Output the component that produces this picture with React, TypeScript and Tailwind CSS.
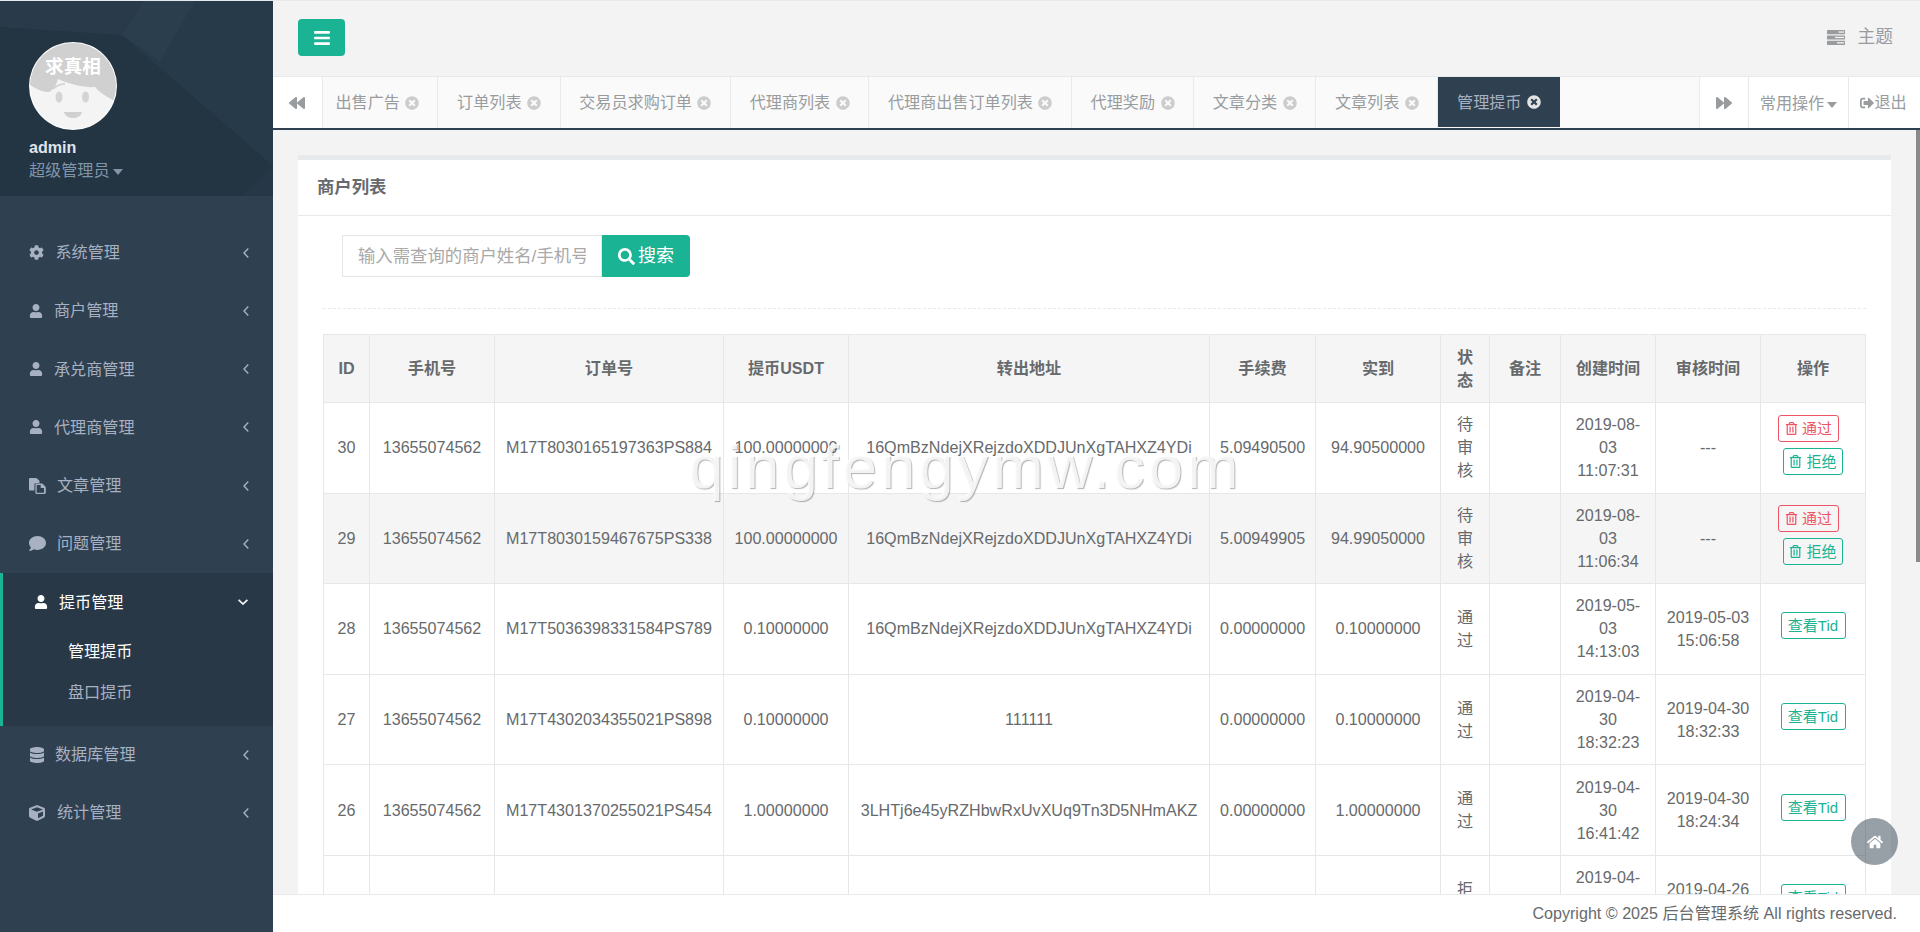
import React from "react";
import {
  FaCog, FaUser, FaComment, FaDatabase, FaCube, FaBars, FaBackward, FaForward,
  FaTimesCircle, FaSearch, FaSignOutAlt, FaRegTrashAlt, FaHome,
} from "react-icons/fa";

const CopyIcon = () => (
  <svg width="17" height="16" viewBox="0 0 17 16" fill="currentColor">
    <path d="M0 1.2C0 .5.5 0 1.2 0h5.6c.5 0 1 .2 1.3.5l2 2c.3.3.4.6.4.9V5H7.5C6.1 5 5.4 5.9 5.4 7v5.6H1.200C.5 12.6 0 12.100 0 11.400z" />
    <path fillRule="evenodd" d="M7.500 5.600h5.300c.4 0 .8.200 1.100.5l2.400 2.400c.3.300.5.700.5 1.100v5.200c0 .6-.5 1.100-1.100 1.100H7.500c-.6 0-1.100-.5-1.100-1.100V6.700c0-.6.5-1.100 1.100-1.100zm.2 1.300v7.800h7.300V10h-3.300V6.900z" />
  </svg>
);

const TasksIcon = () => (
  <svg width="18" height="15" viewBox="0 0 18 15">
    <rect x="0" y="0" width="18" height="4.200" rx=".6" fill="#999c9e" />
    <rect x="0" y="5.400" width="18" height="4.200" rx=".6" fill="#999c9e" />
    <rect x="0" y="10.800" width="18" height="4.200" rx=".6" fill="#999c9e" />
    <rect x="11.500" y="1.400" width="5.500" height="1.300" fill="#f3f3f4" />
    <rect x="8" y="6.800" width="9" height="1.300" fill="#f3f3f4" />
    <rect x="10" y="12.200" width="7" height="1.300" fill="#f3f3f4" />
  </svg>
);

const ChevronLeft = () => (
  <svg width="6" height="10" viewBox="0 0 6 10" fill="none" stroke="currentColor" strokeWidth="1.400" className="shrink-0">
    <polyline points="5.300,.6 1,5 5.300,9.400" />
  </svg>
);

const ChevronDown = () => (
  <svg width="10" height="6" viewBox="0 0 10 6" fill="none" stroke="currentColor" strokeWidth="1.600" className="shrink-0">
    <polyline points=".6,.8 5,5 9.400,.8" />
  </svg>
);

const Avatar = () => (
  <svg width="88" height="88" viewBox="0 0 88 88" className="block">
    <defs>
      <clipPath id="av">
        <circle cx="44" cy="44" r="43" />
      </clipPath>
    </defs>
    <circle cx="44" cy="44" r="44" fill="#ffffff" />
    <g clipPath="url(#av)">
      <rect width="88" height="88" fill="#f4f4f4" />
      <path d="M0 0H88V60C80 56 72 52 66 45C56 46 40 42 29 37C27 44 24 48 20 50C13 50 7 47 0 42Z" fill="#d0d0d0" />
      <path d="M24 47C27 44 31 42 36 42" stroke="#d0d0d0" strokeWidth="1.600" fill="none" />
      <ellipse cx="30" cy="55" rx="3.500" ry="5.500" fill="#d4d4d4" />
      <ellipse cx="56.500" cy="55" rx="3.500" ry="5.500" fill="#d4d4d4" />
      <path d="M35 70H53C52 74 48 76 44 76C40 76 36 74 35 70Z" fill="#d0d0d0" />
      <text x="44" y="30.500" textAnchor="middle" fontSize="18.600" fontWeight="700" fill="#ffffff" fontFamily="'Noto Sans CJK SC', sans-serif">
        求真相
      </text>
    </g>
  </svg>
);

const Nav = ({ icon, label, w }: { icon: React.ReactNode; label: string; w: string }) => (
  <div className="flex h-[58.25px] items-center pl-[29px] pr-[24px] text-[#a7b1c2]">
    <span className={`flex shrink-0 items-center ${w}`}>{icon}</span>
    <span className="flex-1">{label}</span>
    <ChevronLeft />
  </div>
);

const tabs = [
  { t: "出售广告", cls: "pl-[13px] pr-[18px]" },
  { t: "订单列表", cls: "px-[18.6px]" },
  { t: "交易员求购订单", cls: "px-[18.6px]" },
  { t: "代理商列表", cls: "px-[18.6px]" },
  { t: "代理商出售订单列表", cls: "px-[18.6px]" },
  { t: "代理奖励", cls: "px-[18.6px]" },
  { t: "文章分类", cls: "px-[18.6px]" },
  { t: "文章列表", cls: "px-[18.6px]" },
];

const widths = [46, 125, 229, 125, 361, 106, 125, 49, 71, 95, 105, 105];
const heads = ["ID", "手机号", "订单号", "提币USDT", "转出地址", "手续费", "实到", "状态", "备注", "创建时间", "审核时间", "操作"];
const addr = "16QmBzNdejXRejzdoXDDJUnXgTAHXZ4YDi";

type Row = { c: string[]; created: string; audit: string; pending: boolean };
const rows: Row[] = [
  { c: ["30", "13655074562", "M17T8030165197363PS884", "100.00000000", addr, "5.09490500", "94.90500000", "待审核", ""], created: "2019-08-03 11:07:31", audit: "---", pending: true },
  { c: ["29", "13655074562", "M17T8030159467675PS338", "100.00000000", addr, "5.00949905", "94.99050000", "待审核", ""], created: "2019-08-03 11:06:34", audit: "---", pending: true },
  { c: ["28", "13655074562", "M17T5036398331584PS789", "0.10000000", addr, "0.00000000", "0.10000000", "通过", ""], created: "2019-05-03 14:13:03", audit: "2019-05-03 15:06:58", pending: false },
  { c: ["27", "13655074562", "M17T4302034355021PS898", "0.10000000", "111111", "0.00000000", "0.10000000", "通过", ""], created: "2019-04-30 18:32:23", audit: "2019-04-30 18:32:33", pending: false },
  { c: ["26", "13655074562", "M17T4301370255021PS454", "1.00000000", "3LHTj6e45yRZHbwRxUvXUq9Tn3D5NHmAKZ", "0.00000000", "1.00000000", "通过", ""], created: "2019-04-30 16:41:42", audit: "2019-04-30 18:24:34", pending: false },
  { c: ["25", "13655074562", "M17T4268170255021PS120", "1.00000000", addr, "0.00000000", "1.00000000", "拒绝", ""], created: "2019-04-26 10:12:08", audit: "2019-04-26 10:20:16", pending: false },
];

const Td = ({ children }: { children?: React.ReactNode }) => (
  <td className="border border-[#e7e7e7] px-[10px] py-[10px] text-center align-middle">{children}</td>
);

export default function App() {
  return (
    <div className="relative flex h-screen w-full flex-col overflow-hidden bg-[#f3f3f4] font-['Liberation_Sans','Noto_Sans_CJK_SC',sans-serif] text-[16.12px] leading-[23px] text-[#676a6c]">
      <div className="h-px shrink-0 bg-[#e7eaec]" />
      <div className="flex min-h-0 flex-1">
        {/* sidebar */}
        <aside className="flex w-[273px] shrink-0 flex-col bg-[#2f4050]">
          <div className="relative h-[195px] shrink-0 overflow-hidden bg-[#233443] pl-[29px] pt-[41px]">
            <svg className="absolute inset-0" width="273" height="195" viewBox="0 0 273 195">
              <polygon points="0,0 143,0 122,34 0,26" fill="#293b4b" />
              <polygon points="143,0 273,0 273,165 122,34" fill="#273a4a" />
              <polygon points="143,0 195,0 160,60 122,34" fill="#2a3e4e" />
              <polygon points="243,195 273,195 273,165" fill="#263747" />
            </svg>
            <div className="relative">
              <Avatar />
              <div className="mt-[6px] font-bold text-[#dfe4ed]">admin</div>
              <div className="flex items-center text-[#8095a8]">
                超级管理员
                <span className="ml-[3px] mt-[2px] h-0 w-0 border-x-[5.500px] border-t-[6px] border-x-transparent border-t-[#8095a8]" />
              </div>
            </div>
          </div>
          <nav className="pt-[27.500px]">
            <Nav icon={<FaCog size={15} />} label="系统管理" w="w-[26.500px]" />
            <Nav icon={<FaUser size={14} />} label="商户管理" w="w-[25px]" />
            <Nav icon={<FaUser size={14} />} label="承兑商管理" w="w-[25px]" />
            <Nav icon={<FaUser size={14} />} label="代理商管理" w="w-[25px]" />
            <Nav icon={<CopyIcon />} label="文章管理" w="w-[28px]" />
            <Nav icon={<FaComment size={17} />} label="问题管理" w="w-[28px]" />
            <div className="h-[152.500px] border-l-[3px] border-[#1ab394] bg-[#293846]">
              <div className="flex h-[58px] items-center pl-[31px] pr-[25px] text-white">
                <span className="flex w-[25px] shrink-0 items-center">
                  <FaUser size={14} />
                </span>
                <span className="flex-1">提币管理</span>
                <ChevronDown />
              </div>
              <div className="flex h-[41px] items-center pl-[65px] text-white">管理提币</div>
              <div className="flex h-[41px] items-center pl-[65px] text-[#a7b1c2]">盘口提币</div>
            </div>
            <Nav icon={<FaDatabase size={16} />} label="数据库管理" w="w-[26px]" />
            <Nav icon={<FaCube size={16} />} label="统计管理" w="w-[28px]" />
          </nav>
        </aside>

        {/* main */}
        <main className="flex min-w-0 flex-1 flex-col">
          <header className="flex h-[75px] shrink-0 items-start justify-between pl-[25px] pr-[27px] pt-[18px]">
            <button className="flex h-[37px] w-[47px] items-center justify-center rounded-[4px] bg-[#1ab394] text-white">
              <FaBars size={18} />
            </button>
            <div className="flex items-center gap-[12px] pt-[7px] text-[17.800px] text-[#999c9e]">
              <TasksIcon />
              主题
            </div>
          </header>

          <div className="flex h-[54px] shrink-0 border-b-2 border-t border-b-[#2f4050] border-t-[#e7eaec] bg-[#fafafa] text-[#999c9e]">
            <div className="flex w-[49.500px] shrink-0 items-center justify-center border-r border-[#e7eaec] bg-white">
              <FaBackward size={16} />
            </div>
            {tabs.map((x) => (
              <div key={x.t} className={`flex shrink-0 items-center border-r border-[#e7eaec] ${x.cls}`}>
                {x.t}
                <FaTimesCircle size={14} className="ml-[5.500px] text-[#cccccc]" />
              </div>
            ))}
            <div className="flex h-[50px] shrink-0 items-center bg-[#2f4050] px-[18.600px] text-[#a7b1c2]">
              管理提币
              <FaTimesCircle size={14} className="ml-[5.500px] text-[#e3e3e3]" />
            </div>
            <div className="flex-1" />
            <div className="flex w-[50px] shrink-0 items-center justify-center border-x border-[#e7eaec] bg-white">
              <FaForward size={16} />
            </div>
            <div className="flex w-[100px] shrink-0 items-center justify-center border-r border-[#e7eaec] bg-white pt-[2px]">
              常用操作
              <span className="ml-[3px] mt-[2px] h-0 w-0 border-x-[5.500px] border-t-[6px] border-x-transparent border-t-[#999c9e]" />
            </div>
            <div className="flex w-[71px] shrink-0 items-center justify-center bg-white pr-[2px]">
              <FaSignOutAlt size={14} />
              退出
            </div>
          </div>

          <div className="relative min-h-0 flex-1 overflow-hidden pl-[25px] pr-[29px] pt-[25px]">
            <div className="border-t-[5px] border-[#e7eaec] bg-white">
              <div className="flex h-[56px] items-center border-b border-[#e7eaec] pl-[19px] text-[17.360px] font-bold">商户列表</div>
              <div className="px-[25px] pt-[19px]">
                <div className="flex pl-[19px]">
                  <input
                    readOnly
                    placeholder="输入需查询的商户姓名/手机号"
                    className="h-[42px] w-[260px] border border-[#e5e6e7] bg-white px-[15px] text-[17.360px] outline-none placeholder:text-[#a9a9a9]"
                  />
                  <button className="flex h-[42px] w-[88px] items-center justify-center gap-[3px] rounded-r-[4px] bg-[#1ab394] text-[18px] text-white">
                    <FaSearch size={17} />
                    搜索
                  </button>
                </div>
                <div className="mb-[25px] mt-[31px] border-t border-dashed border-[#e7eaec]" />
                <table className="w-[1542px] table-fixed border-collapse">
                  <colgroup>
                    {widths.map((w, i) => (
                      <col key={i} style={{ width: w }} />
                    ))}
                  </colgroup>
                  <thead>
                    <tr className="h-[68px] bg-[#f5f5f6]">
                      {heads.map((h) => (
                        <th key={h} className="border border-[#e7e7e7] px-[10px] text-center align-middle font-bold">
                          {h}
                        </th>
                      ))}
                    </tr>
                  </thead>
                  <tbody>
                    {rows.map((r, i) => (
                      <tr key={r.c[0]} className={`h-[90.600px] ${i === 1 ? "bg-[#f5f5f5]" : "bg-white"}`}>
                        {r.c.map((v, j) => (
                          <Td key={j}>{v}</Td>
                        ))}
                        <Td>{r.created}</Td>
                        <Td>{r.audit}</Td>
                        <Td>
                          {r.pending ? (
                            <div className="mb-[6px] flex flex-col items-center gap-[6px] text-[15px] leading-[25px]">
                              <span className="mr-[9px] flex h-[27px] w-[61px] items-center justify-center gap-[4px] rounded-[3px] border border-[#ed5565] text-[#ed5565]">
                                <FaRegTrashAlt size={13} />
                                通过
                              </span>
                              <span className="flex h-[27px] w-[60px] items-center justify-center gap-[4px] rounded-[3px] border border-[#1ab394] text-[#1ab394]">
                                <FaRegTrashAlt size={13} />
                                拒绝
                              </span>
                            </div>
                          ) : (
                            <div className="mb-[6px] flex justify-center text-[15px] leading-[25px]">
                              <span className="flex h-[27px] w-[65px] items-center justify-center rounded-[3px] border border-[#1ab394] text-[#1ab394]">
                                查看Tid
                              </span>
                            </div>
                          )}
                        </Td>
                      </tr>
                    ))}
                  </tbody>
                </table>
              </div>
            </div>
            <div className="absolute right-0 top-0 h-[432px] w-[4px] bg-[#8a8a8a]" />
          </div>

          <footer className="flex h-[38px] shrink-0 items-center justify-end border-t border-[#e7eaec] bg-white pr-[23px]">
            Copyright © 2025 后台管理系统 All rights reserved.
          </footer>
        </main>
      </div>

      <div className="pointer-events-none absolute left-[689px] top-[427px] whitespace-nowrap text-[62px] leading-[80px] tracking-[3.800px] text-white/85 [text-shadow:1px_1px_1px_rgba(0,0,0,0.3)]">
        qingfengymw.com
      </div>
      <div className="absolute left-[1851px] top-[818px] flex h-[47px] w-[47px] items-center justify-center rounded-full bg-[#2f4050]/50 text-white">
        <FaHome size={16} />
      </div>
    </div>
  );
}
